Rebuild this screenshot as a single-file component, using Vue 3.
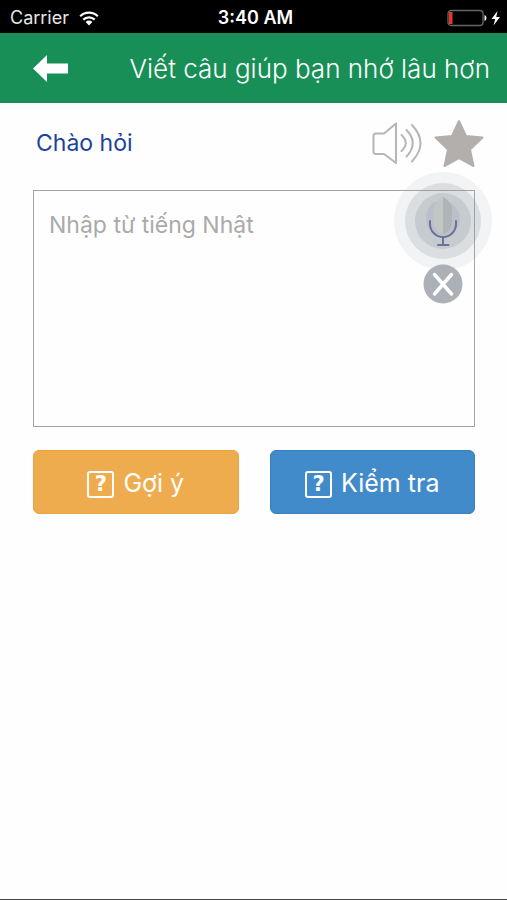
<script setup>
import { ref } from 'vue'

const answer = ref('')
const favourite = ref(false)
</script>

<template>
  <div class="screen">
    <div class="status">
      <div class="carrier">
        <span>Carrier</span>
        <svg width="20" height="15" viewBox="0 0 20 15" aria-hidden="true">
          <path d="M1.2 5.2A12.6 12.6 0 0 1 18.8 5.2" fill="none" stroke="#fff" stroke-width="2.2" />
          <path d="M4.3 8.6A8.2 8.2 0 0 1 15.7 8.6" fill="none" stroke="#fff" stroke-width="2.2" />
          <path d="M6.6 11A4.8 4.8 0 0 1 13.4 11L10 14.6Z" fill="#fff" />
        </svg>
      </div>
      <span class="clock">3:40 AM</span>
      <div class="power">
        <svg width="54" height="18" viewBox="0 0 54 18" aria-hidden="true">
          <rect x="1" y="1.5" width="35" height="15" rx="3" fill="none" stroke="#666" stroke-width="1.3" />
          <path d="M2 3H5.5V15H2Z" fill="#e8352c" />
          <path d="M37.5 6Q39.5 6.5 39.5 9T37.5 12Z" fill="#fff" />
          <path d="M50.5 2L44.5 10H48.2L46.5 16.5L53 8H49.2Z" fill="#fff" />
        </svg>
      </div>
    </div>

    <header class="bar">
      <button class="icon-button" type="button" aria-label="Quay lại">
        <svg width="36" height="28" viewBox="0 0 36 28" aria-hidden="true">
          <path d="M0 13.5L14 0V8.5H35V18.5H14V27Z" fill="#fff" />
        </svg>
      </button>
      <h1>Viết câu giúp bạn nhớ lâu hơn</h1>
    </header>

    <main>
      <div class="prompt">
        <label for="answer">Chào hỏi</label>
        <div class="tools">
          <button class="icon-button" type="button" aria-label="Nghe">
            <svg width="50" height="42" viewBox="0 0 50 42" aria-hidden="true" fill="none" stroke="#b8b5b3" stroke-width="2">
              <path d="M24 1.5V41L12 32H4Q1.5 32 1.5 29.5V14Q1.5 11.5 4 11.5H12Z" stroke-linejoin="round" />
              <g stroke-linecap="round">
                <path d="M29.5 13Q38 21 29.5 29" />
                <path d="M34.5 8Q47 21 34.5 34.5" />
                <path d="M40 3Q57 21 40 39.5" />
              </g>
            </svg>
          </button>
          <button
            class="icon-button"
            type="button"
            aria-label="Yêu thích"
            :aria-pressed="favourite"
            @click="favourite = !favourite"
          >
            <svg width="50" height="48" viewBox="0 0 50 48" aria-hidden="true">
              <path
                d="M25 2L32 17L48.5 18.5L36 30.5L39.5 47L25 39L10.5 47L14 30.5L1.5 18.5L18 17Z"
                fill="#b3afad" stroke="#b3afad" stroke-width="2" stroke-linejoin="round"
              />
            </svg>
          </button>
        </div>
      </div>

      <div class="entry">
        <textarea id="answer" v-model="answer" placeholder="Nhập từ tiếng Nhật"></textarea>
        <button class="icon-button mic" type="button" aria-label="Nói">
          <svg width="98" height="98" viewBox="0 0 98 98" aria-hidden="true">
            <circle cx="49" cy="49" r="49" fill="#9aabb5" fill-opacity=".13" />
            <circle cx="49" cy="49" r="38" fill="#87979c" fill-opacity=".22" />
            <circle cx="49" cy="49" r="28" fill="#87949a" fill-opacity=".25" />
            <path d="M40 30Q32 36 32 48Q34 62 49 63Q64 62 66 48Q66 36 55 30Z" fill="#aab0c6" fill-opacity=".4" />
            <path d="M49 25Q40 30 40 37V51Q41 60 49 62Z" fill="#c2c7c6" />
            <path d="M49 25Q58 30 58 37V51Q57 60 49 62Z" fill="#afb5b7" />
            <g fill="none" stroke="#6a7299" stroke-width="2" stroke-linecap="round">
              <path d="M36 49V52A13 13 0 0 0 62 52V49" />
              <path d="M49 65V72M44 73H54.5" />
            </g>
          </svg>
        </button>
        <button class="icon-button clear" type="button" aria-label="Xóa" @click="answer = ''">
          <svg width="40" height="40" viewBox="0 0 40 40" aria-hidden="true">
            <circle cx="20" cy="20" r="19.5" fill="#abb1b6" />
            <path d="M11.500 10.500L28.500 30M28.500 10.500L11.500 30" stroke="#fff" stroke-width="3.500" stroke-linecap="round" />
          </svg>
        </button>
      </div>

      <div class="actions">
        <button class="action hint" type="button">
          <span class="mark" aria-hidden="true">?</span>
          <span>Gợi ý</span>
        </button>
        <button class="action check" type="button">
          <span class="mark" aria-hidden="true">?</span>
          <span>Kiểm tra</span>
        </button>
      </div>
    </main>
  </div>
</template>

<style>
body {
  margin: 0;
  background: #fefefe;
}
</style>

<style scoped>
.screen {
  box-sizing: border-box;
  display: flex;
  flex-direction: column;
  min-height: 100vh;
  border-bottom: 1px solid #444;
  font-family: Inter, "Noto Sans", sans-serif;
}

.status {
  box-sizing: border-box;
  display: grid;
  grid-template-columns: 1fr auto 1fr;
  align-items: center;
  height: 33px;
  padding: 3px 6px 0 10px;
  background: #000;
  color: #fff;
  font-size: 18px;
  line-height: 24px;
}

.carrier {
  display: flex;
  align-items: center;
  gap: 10px;
  color: #e6e6e6;
}

.clock {
  font-weight: 600;
}

.power {
  display: flex;
  justify-content: flex-end;
}

.icon-button {
  display: block;
  padding: 0;
  border: 0;
  background: none;
  cursor: pointer;
}

.icon-button svg {
  display: block;
}

.bar {
  box-sizing: border-box;
  display: flex;
  align-items: center;
  justify-content: space-between;
  height: 70px;
  padding: 2px 17px 0 33px;
  background: #188f57;
}

h1 {
  margin: 0;
  color: #fff;
  font-size: 26px;
  font-weight: 300;
  line-height: 32px;
  white-space: nowrap;
}

main {
  padding: 16px 32px 0 33px;
}

.prompt {
  display: flex;
  align-items: center;
  justify-content: space-between;
  height: 48px;
  margin: 0 -9px 0 3px;
}

.prompt label {
  color: #1d439b;
  font-size: 23px;
  line-height: 30px;
}

.tools {
  display: flex;
  align-items: center;
  gap: 12px;
}

.entry {
  position: relative;
  margin-top: 23px;
}

textarea {
  display: block;
  box-sizing: border-box;
  width: 100%;
  height: 237px;
  padding: 19px 80px 20px 15px;
  border: 1px solid #a3a3a3;
  border-radius: 0;
  outline: 0;
  background: transparent;
  color: #333;
  font: inherit;
  font-size: 23px;
  line-height: 30px;
  resize: none;
}

textarea::placeholder {
  color: #aaa;
  opacity: 1;
}

.mic {
  position: absolute;
  top: -18px;
  right: -17px;
  border-radius: 50%;
}

.clear {
  position: absolute;
  top: 74px;
  right: 12px;
}

.actions {
  display: grid;
  grid-template-columns: 1fr 1fr;
  gap: 31px;
  margin-top: 23px;
}

.action {
  display: flex;
  align-items: center;
  justify-content: center;
  gap: 9px;
  height: 64px;
  padding: 2px 0 0;
  border: 1px solid;
  border-radius: 6px;
  color: #fff;
  font-family: inherit;
  font-size: 25px;
  line-height: 32px;
  cursor: pointer;
}

.hint {
  border-color: #eea33d;
  background: #efac4e;
}

.check {
  border-color: #387fbd;
  background: #428bca;
}

.mark {
  box-sizing: border-box;
  width: 27px;
  height: 27px;
  margin-top: 3px;
  border: 2px solid #fff;
  border-radius: 3px;
  font-family: "DejaVu Sans", sans-serif;
  font-size: 21px;
  font-weight: 700;
  line-height: 23px;
  text-align: center;
}
</style>
